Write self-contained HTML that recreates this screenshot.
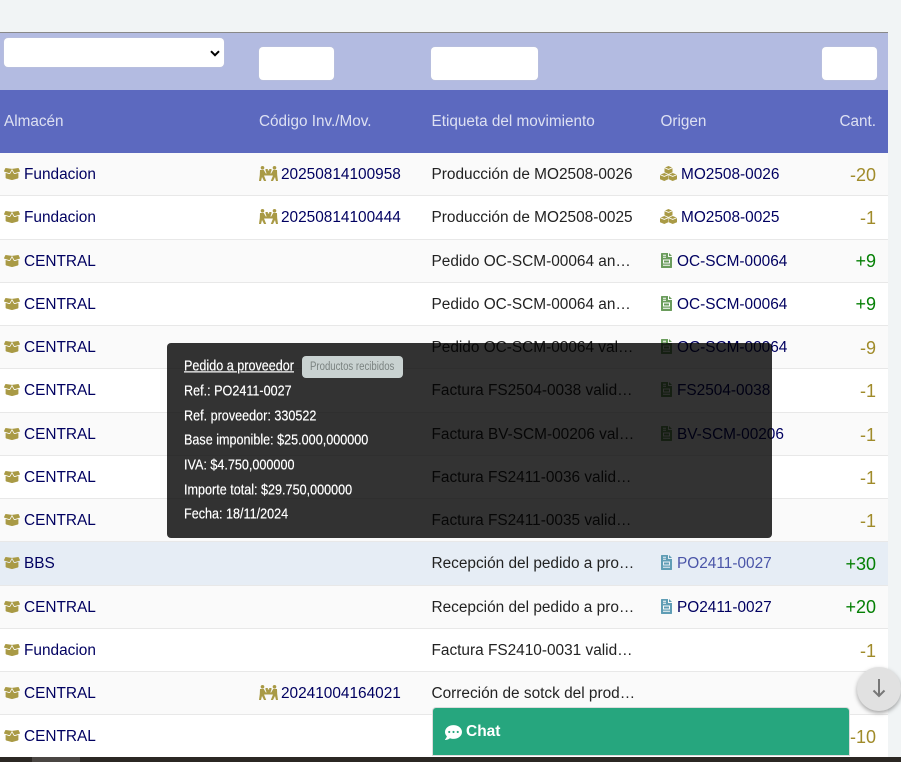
<!DOCTYPE html>
<html lang="es"><head><meta charset="utf-8"><title>Movimientos</title>
<style>
html,body{margin:0;padding:0}
body{width:901px;height:762px;overflow:hidden;background:#f1f4f5;position:relative;font-family:"Liberation Sans",sans-serif;color:#222}
.abs,.r,.t{position:absolute}
.top{left:0;top:32px;width:888px;height:58px;background:#b3bbe1;border-top:1px solid #888;box-sizing:border-box}
.in{position:absolute;background:#fff;border-radius:4px;box-shadow:0 0 1px #ccc}
.hd{left:0;top:90px;width:888px;height:63px;background:#5c69bf}
.hd span{position:absolute;top:23px;color:#dde0f2;font-size:15.3px;line-height:17px;white-space:nowrap}
.r{left:0;width:888px;height:43.25px;box-sizing:border-box;border-bottom:1px solid #e8e8e8;background:#fff}
.o{background:#fafafa}
.r .t{top:13px;line-height:17px;font-size:15.4px;white-space:nowrap;color:#000060}
.r .l{left:431.5px;color:#222}
.r .w{left:24px}.r .c{left:281px}
.r .p{left:681px}.r .f{left:677px}
.r .q{right:12px;top:12px;font-size:18px;line-height:20px;color:#a08b2a}
.r .g{color:#058005;top:11px}
svg.i{position:absolute;fill:#a99a45}
.bx{left:4px;top:15px;width:16px;height:12px}
.pc{left:259px;top:13px;width:19px;height:15px}
.cu{left:660px;top:13px;width:17px;height:15px}
.fi{left:661px;top:13px;width:11px;height:15px}
.gr{fill:#6a9c5c!important}.bl{fill:#5f9db5!important}
.tip{left:167px;top:343px;width:605px;height:195px;background:rgba(0,0,0,.8);border-radius:4px;color:#fff;font-size:14px;overflow:hidden}
.tip div{position:absolute;left:16.5px;white-space:nowrap;line-height:16px;transform:scale(.9,1.06);transform-origin:0 50%;text-shadow:0 0 .4px #fff}
.tag{position:absolute;left:135px;top:13px;width:101px;height:22px;border-radius:4px;background:#c9d2d1}
.tag b{position:absolute;left:8px;top:0;font-weight:normal;color:#7a8280;font-size:11.5px;line-height:22px;white-space:nowrap;transform:scaleX(.835);transform-origin:0 50%}
.chat{left:433px;top:708px;width:416px;height:47px;background:#26a67e;border-radius:3px 3px 0 0;box-shadow:0 0 0 1px #ddd;color:#fff;font-weight:bold;font-size:15.5px}
.chat span{position:absolute;left:33px;top:15px;line-height:18px}
.dn{left:857px;top:667px;width:44px;height:44px;border-radius:50%;background:#e1e1e1;box-shadow:0 2px 4px rgba(0,0,0,.35)}
.bar{left:0;top:757px;width:901px;height:5px;background:#2b2723}
</style></head><body>
<svg width="0" height="0" style="position:absolute"><defs>
<symbol id="box" viewBox="0 30 640 450" preserveAspectRatio="none"><path d="M425.7 256c-16.9 0-32.8-9-41.4-23.4L320 126l-64.2 106.6c-8.7 14.5-24.6 23.5-41.5 23.5-4.5 0-9-.6-13.3-1.9L64 215v178c0 14.7 10 27.5 24.2 31l216.2 54.1c10.2 2.5 20.9 2.5 31 0L551.8 424c14.2-3.6 24.2-16.4 24.2-31V215l-137 39.1c-4.3 1.3-8.8 1.9-13.3 1.9zm212.6-112.2L586.8 41c-3.1-6.2-9.8-9.8-16.7-8.9L320 64l91.7 152.1c3.8 6.3 11.4 9.3 18.5 7.3l197.9-56.5c9.900-2.900 14.700-13.900 10.200-23.100zM53.200 41L1.700 143.800c-4.600 9.200.3 20.200 10.100 23l197.900 56.500c7.100 2 14.700-1 18.500-7.300L320 64 69.800 32.100c-6.900-.8-13.500 2.700-16.600 8.900z"/></symbol>
<symbol id="pc" viewBox="0 0 19 15"><circle cx="3.500" cy="1.800" r="1.800"/><circle cx="15.500" cy="1.800" r="1.800"/><path d="M1 4h3.800l2 3.500h5.400l2-3.500H18l.2 5 .8 6h-2l-1-4-2 4h-2.200l2-5V9.500H5.200V10l2 5H5l-2-4-1 4H0l.8-6z"/><path d="M6.500 3h2.300v1.500h1.400V3h2.300v1.500l-1.200 3.300H7.700L6.500 4.500z"/></symbol>
<symbol id="cu" viewBox="0 0 17 15"><path d="M8.500 0L12.500 1.700v4.600L8.500 8 4.500 6.300V1.700z"/><path d="M4.300 7L8.300 8.700v4.600L4.300 15 0 13.300V8.700z"/><path d="M12.700 7L17 8.700v4.600L12.700 15 8.700 13.300V8.700z"/><path d="M4.500 1.700L8.500 3.400 12.500 1.700M.2 8.700l4.100 1.700 4-1.700M8.700 8.700l4 1.700 4.100-1.700" fill="none" stroke="#fff" stroke-width=".8"/></symbol>
<symbol id="fi" viewBox="0 0 11 15"><path fill-rule="evenodd" d="M0 .8C0 .3.300 0 .8 0H7v3.500c0 .3.200.5.500.5H11v10.200c0 .5-.3.800-.8.800H.8c-.5 0-.8-.3-.8-.8zM2 1.800v1h3v-1zm0 2v1h3v-1zm0 2.700v4h7v-4zm1 1h5v2H3zm-1 4.300v1h7v-1z"/><path d="M8 0l3 3H8z"/></symbol>
</defs></svg>

<div class="abs top">
<div class="in" style="left:4px;top:5px;width:220px;height:29px">
<svg style="position:absolute;left:206px;top:12px" width="10" height="7" viewBox="0 0 10 7"><path d="M1 1.200l4 4 4-4" fill="none" stroke="#000" stroke-width="2"/></svg></div>
<div class="in" style="left:259px;top:14px;width:75px;height:33px"></div>
<div class="in" style="left:431px;top:14px;width:107px;height:33px"></div>
<div class="in" style="left:822px;top:14px;width:55px;height:33px"></div>
</div>
<div class="abs hd"><span style="left:4px">Almacén</span><span style="left:259px">Código Inv./Mov.</span><span style="left:431.500px">Etiqueta del movimiento</span><span style="left:660.500px">Origen</span><span style="right:12px">Cant.</span></div>

<div class="r o" style="top:153px"><svg class="i bx"><use href="#box"/></svg><span class="t w">Fundacion</span><svg class="i pc"><use href="#pc"/></svg><span class="t c">20250814100958</span><span class="t l">Producción de MO2508-0026</span><svg class="i cu"><use href="#cu"/></svg><span class="t p">MO2508-0026</span><span class="t q">-20</span></div>
<div class="r" style="top:196.250px"><svg class="i bx"><use href="#box"/></svg><span class="t w">Fundacion</span><svg class="i pc"><use href="#pc"/></svg><span class="t c">20250814100444</span><span class="t l">Producción de MO2508-0025</span><svg class="i cu"><use href="#cu"/></svg><span class="t p">MO2508-0025</span><span class="t q">-1</span></div>
<div class="r o" style="top:239.500px"><svg class="i bx"><use href="#box"/></svg><span class="t w">CENTRAL</span><span class="t l">Pedido OC-SCM-00064 an…</span><svg class="i fi gr"><use href="#fi"/></svg><span class="t f">OC-SCM-00064</span><span class="t q g">+9</span></div>
<div class="r" style="top:282.750px"><svg class="i bx"><use href="#box"/></svg><span class="t w">CENTRAL</span><span class="t l">Pedido OC-SCM-00064 an…</span><svg class="i fi gr"><use href="#fi"/></svg><span class="t f">OC-SCM-00064</span><span class="t q g">+9</span></div>
<div class="r o" style="top:326px"><svg class="i bx"><use href="#box"/></svg><span class="t w">CENTRAL</span><span class="t l">Pedido OC-SCM-00064 val…</span><svg class="i fi gr"><use href="#fi"/></svg><span class="t f">OC-SCM-00064</span><span class="t q">-9</span></div>
<div class="r" style="top:369.250px"><svg class="i bx"><use href="#box"/></svg><span class="t w">CENTRAL</span><span class="t l">Factura FS2504-0038 valid…</span><svg class="i fi gr"><use href="#fi"/></svg><span class="t f">FS2504-0038</span><span class="t q">-1</span></div>
<div class="r o" style="top:412.500px"><svg class="i bx"><use href="#box"/></svg><span class="t w">CENTRAL</span><span class="t l">Factura BV-SCM-00206 val…</span><svg class="i fi gr"><use href="#fi"/></svg><span class="t f">BV-SCM-00206</span><span class="t q">-1</span></div>
<div class="r" style="top:455.750px"><svg class="i bx"><use href="#box"/></svg><span class="t w">CENTRAL</span><span class="t l">Factura FS2411-0036 valid…</span><span class="t q">-1</span></div>
<div class="r o" style="top:499px"><svg class="i bx"><use href="#box"/></svg><span class="t w">CENTRAL</span><span class="t l">Factura FS2411-0035 valid…</span><span class="t q">-1</span></div>
<div class="r" style="top:542.250px;background:#e6edf5"><svg class="i bx"><use href="#box"/></svg><span class="t w">BBS</span><span class="t l">Recepción del pedido a pro…</span><svg class="i fi bl"><use href="#fi"/></svg><span class="t f" style="color:#4a55a8">PO2411-0027</span><span class="t q g" style="top:12px">+30</span></div>
<div class="r o" style="top:585.500px"><svg class="i bx"><use href="#box"/></svg><span class="t w">CENTRAL</span><span class="t l">Recepción del pedido a pro…</span><svg class="i fi bl"><use href="#fi"/></svg><span class="t f">PO2411-0027</span><span class="t q g">+20</span></div>
<div class="r" style="top:628.750px"><svg class="i bx"><use href="#box"/></svg><span class="t w">Fundacion</span><span class="t l">Factura FS2410-0031 valid…</span><span class="t q">-1</span></div>
<div class="r o" style="top:672px"><svg class="i bx"><use href="#box"/></svg><span class="t w">CENTRAL</span><svg class="i pc"><use href="#pc"/></svg><span class="t c">20241004164021</span><span class="t l">Correción de sotck del prod…</span><span class="t q">-1</span></div>
<div class="r" style="top:715.250px;border:0"><svg class="i bx"><use href="#box"/></svg><span class="t w">CENTRAL</span><span class="t q">-10</span></div>

<div class="abs bar"><div class="abs" style="left:32px;top:0;width:48px;height:5px;background:#4a4643"></div></div>

<div class="abs tip">
<div style="top:14px;text-decoration:underline">Pedido a proveedor</div><span class="tag"><b>Productos recibidos</b></span>
<div style="top:39px">Ref.: PO2411-0027</div>
<div style="top:64px">Ref. proveedor: 330522</div>
<div style="top:88px">Base imponible: $25.000,000000</div>
<div style="top:113px">IVA: $4.750,000000</div>
<div style="top:138px">Importe total: $29.750,000000</div>
<div style="top:162px">Fecha: 18/11/2024</div>
</div>

<div class="abs chat"><svg style="position:absolute;left:12px;top:16px" width="17" height="17" viewBox="0 0 512 512" fill="#fff"><path d="M256 32C114.600 32 0 125.100 0 240c0 49.600 21.400 95 57 130.700C44.500 421.100 2.700 466 2.200 466.500c-2.200 2.300-2.800 5.700-1.500 8.700S4.800 480 8 480c66.300 0 116-31.800 140.600-51.400 32.700 12.300 69 19.400 107.400 19.400 141.400 0 256-93.100 256-208S397.400 32 256 32zM128 272c-17.700 0-32-14.300-32-32s14.300-32 32-32 32 14.300 32 32-14.300 32-32 32zm128 0c-17.700 0-32-14.300-32-32s14.300-32 32-32 32 14.300 32 32-14.300 32-32 32zm128 0c-17.700 0-32-14.300-32-32s14.300-32 32-32 32 14.300 32 32-14.300 32-32 32z"/></svg><span style="top:15px">Chat</span></div>

<div class="abs dn"><svg style="position:absolute;left:14px;top:10px" width="16" height="22" viewBox="0 0 16 22"><path d="M8 2v17M2.500 13.500L8 19l5.500-5.500" fill="none" stroke="#777" stroke-width="2"/></svg></div>
</body></html>
